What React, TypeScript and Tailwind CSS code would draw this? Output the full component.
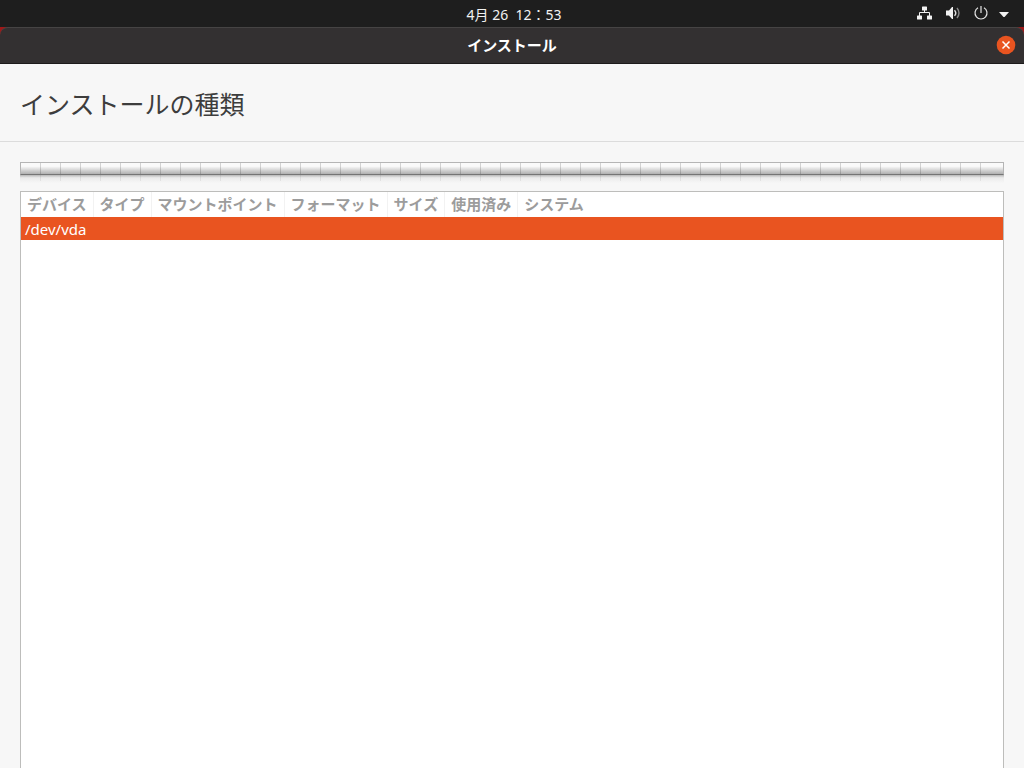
const columns = ['デバイス', 'タイプ', 'マウントポイント', 'フォーマット', 'サイズ', '使用済み'];

function NetworkIcon() {
  return (
    <svg width="16" height="16" viewBox="0 0 16 16" fill="#f2f2f2" aria-hidden="true">
      <rect x="5" y="0.500" width="5" height="4" rx="0.600" />
      <rect x="0" y="9.500" width="5" height="4" rx="0.600" />
      <rect x="10" y="9.500" width="5" height="4" rx="0.600" />
      <path d="M7.500 4v2.500M2.500 10v-3.500h10v3.500" fill="none" stroke="#f2f2f2" />
    </svg>
  );
}

function VolumeIcon() {
  return (
    <svg width="16" height="16" viewBox="0 0 16 16" aria-hidden="true">
      <path d="M1 4.500h3L7 1h1v12H7l-3-3.500H1z" fill="#f2f2f2" />
      <path d="M9.500 4.200q2.600 2.800 0 5.600" fill="none" stroke="#e0e0e0" strokeWidth="1.400" />
      <path d="M12 2q4 5 0 10" fill="none" stroke="#8a8a8a" strokeWidth="1.400" />
    </svg>
  );
}

function PowerIcon() {
  return (
    <svg width="16" height="16" viewBox="0 0 16 16" fill="none" stroke="#e6e6e6" aria-hidden="true">
      <path d="M5 1.800a6 6 0 1 0 6 0" strokeWidth="1.200" />
      <path d="M8 0v7" strokeWidth="1.200" />
    </svg>
  );
}

function TopBar() {
  return (
    <header className="grid h-[27px] grid-cols-[1fr_auto_1fr] items-center bg-[#1e1e1e] px-3 text-sm text-[#f2f2f2]">
      <span />
      <time className="pt-0.5 pl-1 whitespace-pre">4月 26  12：53</time>
      <button type="button" aria-label="システムメニュー" className="flex items-center justify-self-end">
        <span className="flex gap-3">
          <NetworkIcon />
          <VolumeIcon />
          <PowerIcon />
        </span>
        <svg className="ml-[7px]" width="16" height="16" viewBox="0 0 16 16" aria-hidden="true">
          <path d="M3 6h10l-4 4.600q-1 1-2 0z" fill="#f2f2f2" />
        </svg>
      </button>
    </header>
  );
}

function TitleBar() {
  return (
    <div className="bg-[#a01818]">
      <div className="grid h-[37px] grid-cols-[1fr_auto_1fr] items-center rounded-t-lg border-t border-b border-t-[#464444] border-b-[#1d1b1b] bg-[#333031] px-2 pb-px text-white">
        <span />
        <h2 className="text-[15px] leading-5 font-bold">インストール</h2>
        <button
          type="button"
          aria-label="閉じる"
          className="flex size-5 items-center justify-center justify-self-end"
        >
          <svg width="20" height="20" viewBox="0 0 20 20" aria-hidden="true">
            <circle cx="10" cy="10" r="9.300" fill="#e95420" />
            <path d="M6.500 6.500l7 7M13.500 6.500l-7 7" stroke="#fff" strokeWidth="1.500" />
          </svg>
        </button>
      </div>
    </div>
  );
}

// Empty partition bar with its reflection underneath
function PartitionBar() {
  return (
    <div role="img" aria-label="パーティション">
      <div className="h-[13px] border border-[#b5b5b5] border-b-[#757575] bg-linear-to-b from-[#fafafa] from-30% to-[#b0b0b0] pr-2">
        <div className="h-full bg-[repeating-linear-gradient(to_right,transparent_0_19px,#00000028_19px_20px)]" />
      </div>
      <div className="h-2 bg-linear-to-b from-[#b8b8b8] via-[#ebebeb] via-35% to-[#f7f7f7] px-px">
        <div className="mr-2 h-1.5 bg-[repeating-linear-gradient(to_right,transparent_0_19px,#00000010_19px_20px)]" />
      </div>
    </div>
  );
}

function DeviceTable() {
  return (
    <div className="flex-1 border border-b-0 border-[#bdbdbb] bg-white">
      <table className="w-full border-separate border-spacing-0 text-left text-[15px]">
        <thead>
          <tr className="h-[25px] leading-5 text-[#9c9c9c]">
            {columns.map((name) => (
              <th key={name} className="w-px border-r border-[#f2f2f2] px-[6px] pb-px font-bold whitespace-nowrap">
                {name}
              </th>
            ))}
            <th className="px-[6px] pb-px font-bold">システム</th>
          </tr>
        </thead>
        <tbody>
          <tr className="h-[23px] bg-[#e95420] leading-5 text-white">
            <td colSpan={7} className="px-1">
              /dev/vda
            </td>
          </tr>
        </tbody>
      </table>
    </div>
  );
}

export default function App() {
  return (
    <div className="flex h-screen flex-col overflow-hidden bg-[#f7f7f7] font-['Noto_Sans','Noto_Sans_CJK_JP',sans-serif]">
      <TopBar />
      <TitleBar />
      <div className="border-b border-[#dcdcdc] pt-[22px] pr-5 pb-[19px] pl-5">
        <h1 className="text-[25px] leading-9 text-[#3d3d3d]">インストールの種類</h1>
      </div>
      <main className="flex flex-1 flex-col gap-2 px-5 pt-5">
        <PartitionBar />
        <DeviceTable />
      </main>
    </div>
  );
}
